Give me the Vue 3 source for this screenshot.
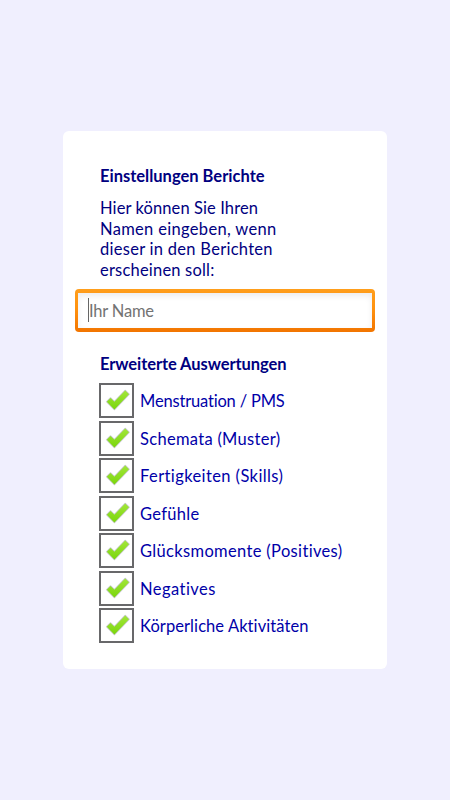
<script setup>
import { ref } from 'vue'

const name = ref('')

// spacing is the tracking of each label in px
const reports = ref([
  { id: 'pms', label: 'Menstruation / PMS', spacing: -0.18, checked: true },
  { id: 'schemata', label: 'Schemata (Muster)', spacing: 0.3, checked: true },
  { id: 'skills', label: 'Fertigkeiten (Skills)', spacing: 0.4, checked: true },
  { id: 'feelings', label: 'Gefühle', spacing: 0.3, checked: true },
  { id: 'positives', label: 'Glücksmomente (Positives)', spacing: 0.34, checked: true },
  { id: 'negatives', label: 'Negatives', spacing: 0.46, checked: true },
  { id: 'activities', label: 'Körperliche Aktivitäten', spacing: 0.08, checked: true },
])
</script>

<template>
  <main class="screen">
    <section class="card">
      <h2 class="title">Einstellungen Berichte</h2>
      <p class="intro">
        <span class="line line--1">Hier können Sie Ihren</span>
        <span class="line line--2">Namen eingeben, wenn</span>
        <span class="line line--3">dieser in den Berichten</span>
        <span class="line line--4">erscheinen soll:</span>
      </p>

      <div class="field">
        <div class="field__inner">
          <span class="caret"></span>
          <input v-model="name" class="field__input" type="text" placeholder="Ihr Name" />
        </div>
      </div>

      <h2 class="title title--reports">Erweiterte Auswertungen</h2>
      <div class="list">
        <label v-for="item in reports" :key="item.id" class="row">
          <input v-model="item.checked" class="row__input" type="checkbox" />
          <span class="box">
            <svg v-if="item.checked" class="tick" viewBox="0 0 26 24">
              <defs>
                <linearGradient :id="`green-${item.id}`" x1="0" y1="0" x2="0" y2="1">
                  <stop offset="0" stop-color="#a2e63a" />
                  <stop offset="1" stop-color="#7ad60c" />
                </linearGradient>
              </defs>
              <path
                d="M1.8 12.7 L5.5 9 L9.4 12.7 L20.2 1.5 L24 5.3 L9.4 20.4 Z"
                :fill="`url(#green-${item.id})`"
                stroke="#c6c8cc"
                stroke-width="1.5"
                stroke-linejoin="round"
                paint-order="stroke"
              />
            </svg>
          </span>
          <span class="row__label" :style="{ letterSpacing: `${item.spacing}px` }">{{ item.label }}</span>
        </label>
      </div>
    </section>
  </main>
</template>

<style>
body {
  background: #f0effe;
}
</style>

<style scoped>
.screen {
  box-sizing: border-box;
  height: 800px;
  padding: 131px 63px;
  background: #f0effe;
  font-family: Lato, "Open Sans", sans-serif;
  font-size: 16.5px;
  font-variant-ligatures: none;
  color: #000080;
}

.card {
  box-sizing: border-box;
  width: 324px;
  height: 538px;
  padding: 35px 12px 0;
  border-radius: 6px;
  background: #fff;
}

.title {
  margin: 0 0 0 25px;
  font-size: 16.5px;
  font-weight: 700;
  line-height: 21px;
  white-space: nowrap;
}

.intro {
  margin: 11px 0 8.5px 25px;
  line-height: 20.5px;
}

.line {
  display: block;
  white-space: nowrap;
}

.line--1 {
  letter-spacing: 0.1px;
}

.line--2 {
  letter-spacing: 0.32px;
}

.line--3 {
  letter-spacing: 0.28px;
}

.line--4 {
  letter-spacing: 0.2px;
}

.field {
  box-sizing: border-box;
  width: 300px;
  height: 43px;
  padding: 4px 3px;
  border-radius: 4px;
  background: linear-gradient(#ff9e1c, #ff920f 45%, #f27500);
}

.field__inner {
  display: flex;
  align-items: center;
  box-sizing: border-box;
  height: 35px;
  padding-left: 10px;
  background: #fff;
  box-shadow: inset 0 3px 6px #ececee;
}

.caret {
  width: 1px;
  height: 24px;
  background: #666;
}

.field__input {
  width: 260px;
  padding: 1px 0 0;
  border: 0;
  outline: 0;
  background: transparent;
  font: inherit;
  letter-spacing: -0.2px;
  color: #000080;
}

.field__input::placeholder {
  color: #737373;
  opacity: 1;
}

.title--reports {
  margin-top: 22.5px;
  letter-spacing: -0.08px;
}

.list {
  display: grid;
  grid-auto-rows: 37.5px;
  margin: 8px 0 0 24px;
}

.row {
  display: flex;
  align-items: flex-start;
  color: #0000a8;
}

.row__input {
  display: none;
}

.box {
  display: flex;
  box-sizing: border-box;
  width: 35px;
  height: 35px;
  padding: 4px 0 0 4px;
  border: 2px solid #68686a;
  background: #fff;
}

.tick {
  width: 26px;
  height: 24px;
}

.row__label {
  margin-left: 6px;
  line-height: 36px;
  white-space: nowrap;
}
</style>
